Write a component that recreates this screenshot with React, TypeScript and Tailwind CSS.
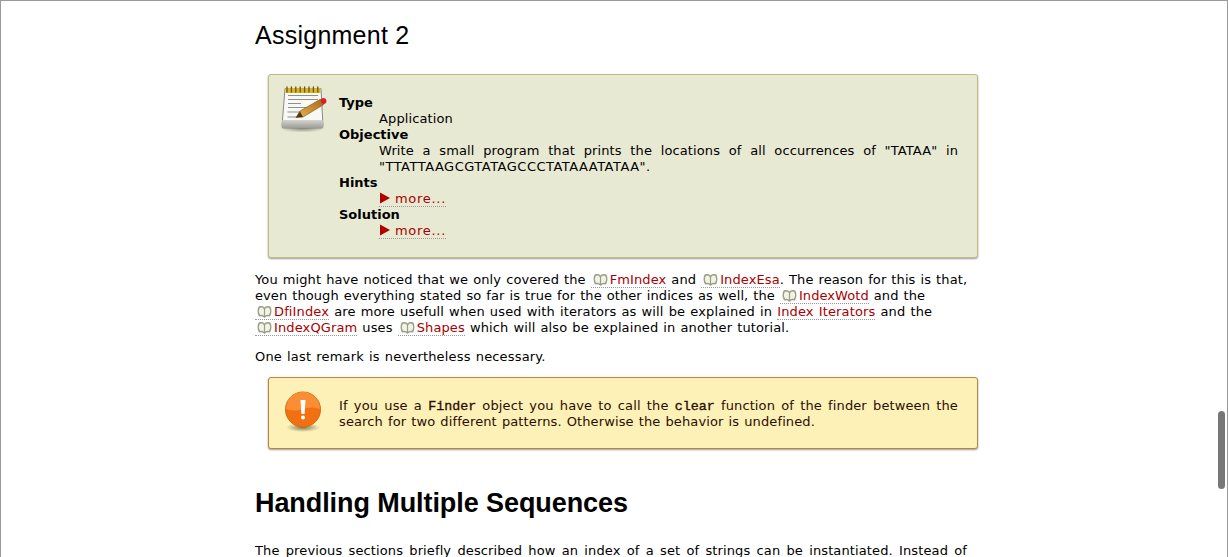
import React from "react";

const Book = () => (
  <svg width="15" height="12" viewBox="0 0 15 12" className="inline-block align-[-2px] mr-[2px]">
    <path d="M7.5 2.5C6 .8 3.5 .6 2.2 1.2C1 3.5 1 7.5 2.6 9.8C4.2 9.3 6.2 9.6 7.5 11C8.8 9.6 10.8 9.3 12.4 9.8C14 7.5 14 3.5 12.8 1.2C11.5 .6 9 .8 7.5 2.5Z" fill="#f2f3e4" stroke="#9b9f84" strokeWidth="1.6" strokeLinejoin="round" />
    <path d="M7.5 2.5V11" stroke="#9b9f84" strokeWidth="1.2" />
  </svg>
);

const Link = ({ children }: { children: React.ReactNode }) => (
  <span className="text-[#a80000] border-b border-dotted border-[#999]">{children}</span>
);

const DocLink = ({ children }: { children: React.ReactNode }) => (
  <span className="border-b border-dotted border-[#999] pl-[2px] whitespace-nowrap">
    <Book />
    <span className="text-[#a80000]">{children}</span>
  </span>
);

const More = () => (
  <span className="text-[#a80000] border-b border-dotted border-[#999] inline-block leading-[15px] h-[16px] tracking-[0.7px]">
    <svg width="12" height="12" viewBox="0 0 12 12" className="inline-block align-[-1px] mr-[4px]">
      <path d="M1 0.5L11 6L1 11.5Z" fill="#b00000" />
    </svg>
    more...
  </span>
);

const NotepadIcon = () => (
  <svg width="48" height="47" viewBox="0 0 48 47" className="shrink-0">
    <defs>
      <radialGradient id="sh" cx="0.5" cy="0.5" r="0.5">
        <stop offset="0" stopColor="#000" stopOpacity="0.45" />
        <stop offset="1" stopColor="#000" stopOpacity="0" />
      </radialGradient>
      <linearGradient id="pen" x1="0" y1="1" x2="1" y2="0">
        <stop offset="0" stopColor="#eeb450" />
        <stop offset="1" stopColor="#a86a18" />
      </linearGradient>
      <linearGradient id="base" x1="0" y1="0" x2="0" y2="1">
        <stop offset="0" stopColor="#d4d4d0" />
        <stop offset="1" stopColor="#9c9c98" />
      </linearGradient>
    </defs>
    <ellipse cx="23.5" cy="42" rx="23.5" ry="4.5" fill="url(#sh)" />
    <path d="M6 2.5H42L44 40Q44 42 42 42H5Q3 42 3 40Z" fill="#f8f8f4" stroke="#8a8a86" strokeWidth="1" />
    <path d="M3.4 34H43.6L44 40Q44 42 42 42H5Q3 42 3 40Z" fill="url(#base)" />
    <rect x="6.5" y="2" width="35" height="5" fill="#d9b52a" />
    <path d="M8 1V6M12.4 1V6M16.8 1V6M21.2 1V6M25.6 1V6M30 1V6M34.4 1V6M38.8 1V6" stroke="#6d570c" strokeWidth="1.3" strokeLinecap="round" />
    <path d="M9 9.5H39M9 13.5H39M9 17.5H22M9 21.5H39M8.5 26H30M8.5 31H19" stroke="#8f8f8c" strokeWidth="1" />
    <path d="M21 25L41 13.5L44 19L24 31L17 31.5Z" fill="url(#pen)" stroke="#7a5010" strokeWidth="0.6" />
    <path d="M17 31.5L21 25.5L24 31Z" fill="#4a3a1a" />
    <path d="M41 13.5L44 12Q47 11.5 47.5 14.5Q47.5 17 46 17.5L44 19Z" fill="#d81f2a" />
  </svg>
);

const WarnIcon = () => (
  <svg width="38" height="42" viewBox="0 0 38 42" className="shrink-0">
    <defs>
      <radialGradient id="sh2" cx="0.5" cy="0.5" r="0.5">
        <stop offset="0" stopColor="#000" stopOpacity="0.5" />
        <stop offset="1" stopColor="#000" stopOpacity="0" />
      </radialGradient>
    </defs>
    <ellipse cx="19" cy="36.5" rx="17" ry="4.5" fill="url(#sh2)" />
    <circle cx="19" cy="18.5" r="17.5" fill="#f26f12" stroke="#c9700f" strokeWidth="1" />
    <path d="M2 18A17 17 0 0 1 36 18Q28 15 19 18Q10 21 2 18Z" fill="#fb8d35" />
    <path d="M16.5 9H21.5L20.6 23H17.4Z" fill="#fff" />
    <circle cx="19" cy="26.5" r="2" fill="#fff" />
  </svg>
);

const mono = { fontFamily: '"Liberation Mono", monospace' };

export default function App() {
  return (
    <div
      className="relative h-[557px] overflow-hidden bg-white border-t border-l border-r border-[#9a9a9a] text-black text-[13px] leading-[16px] tracking-[0.12px] [word-spacing:0.8px]"
      style={{ fontFamily: '"DejaVu Sans", Verdana, sans-serif' }}
    >
      <div className="w-[723px] ml-[254px]">
        <h2 className="mt-[20px] text-[25px] leading-[29px] font-normal tracking-[0.25px] [word-spacing:0]" style={{ fontFamily: '"Liberation Sans", Arial, sans-serif' }}>
          Assignment 2
        </h2>

        <div className="mt-[24px] ml-[13px] h-[184px] flex items-start gap-[12px] pl-[10px] pr-[19px] pt-[11px] bg-[#e8e9d3] border border-[#bdbd80] rounded-[3px] shadow-[0_1px_2px_rgba(0,0,0,0.4)]">
          <NotepadIcon />
          <dl className="flex-1 mt-[9px] text-justify">
            <dt className="font-bold tracking-normal [word-spacing:0]">Type</dt>
            <dd className="ml-[40px]">Application</dd>
            <dt className="font-bold tracking-normal [word-spacing:0]">Objective</dt>
            <dd className="ml-[40px]">
              Write a small program that prints the locations of all occurrences of "TATAA" in <span className="tracking-[0.5px]">"TTATTAAGCGTATAGCCCTATAAATATAA".</span>
            </dd>
            <dt className="font-bold tracking-normal [word-spacing:0]">Hints</dt>
            <dd className="ml-[40px]"><More /></dd>
            <dt className="font-bold tracking-normal [word-spacing:0]">Solution</dt>
            <dd className="ml-[40px]"><More /></dd>
          </dl>
        </div>

        <p className="mt-[14px] mr-[11px] whitespace-nowrap">
          <span className="block tracking-[0.11px] [word-spacing:0.75px]">You might have noticed that we only covered the <DocLink>FmIndex</DocLink> and <DocLink>IndexEsa</DocLink>. The reason for this is that,</span>
          <span className="block tracking-[0.08px]">even though everything stated so far is true for the other indices as well, the <DocLink>IndexWotd</DocLink> and the</span>
          <span className="block tracking-[0.14px]"><DocLink>DfiIndex</DocLink> are more usefull when used with iterators as will be explained in <Link>Index Iterators</Link> and the</span>
          <span className="block"><DocLink>IndexQGram</DocLink> uses <DocLink>Shapes</DocLink> which will also be explained in another tutorial.</span>
        </p>

        <p className="mt-[13px] tracking-[0.17px]">One last remark is nevertheless necessary.</p>

        <div className="mt-[12px] ml-[13px] h-[72px] flex items-start gap-[17px] pl-[15px] pr-[19px] pt-[13px] bg-[#fdf1b8] border border-[#b8863c] rounded-[3px] shadow-[0_1px_2px_rgba(0,0,0,0.4)]">
          <WarnIcon />
          <p className="flex-1 mt-[7px] text-justify text-[#2a0f00]">
            If you use a <code style={mono} className="font-normal text-[13.33px] tracking-normal leading-none [-webkit-text-stroke:0.35px]">Finder</code> object you have to call the <code style={mono} className="font-normal text-[13.33px] tracking-normal leading-none [-webkit-text-stroke:0.35px]">clear</code> function of the finder between the search for two different patterns. Otherwise the behavior is undefined.
          </p>
        </div>

        <h1 className="mt-[39px] text-[27px] leading-[31px] font-bold tracking-[-0.08px] [word-spacing:0]" style={{ fontFamily: '"Liberation Sans", Arial, sans-serif' }}>
          Handling Multiple Sequences
        </h1>

        <p className="mt-[24px] mr-[11px] text-justify">
          The previous sections briefly described how an index of a set of strings can be instantiated. Instead of providing a single sequence you have to provide a whole set.
        </p>
      </div>
      <div className="absolute left-[1217px] top-[410px] w-[7px] h-[78px] rounded-full bg-[#777]" />
    </div>
  );
}
